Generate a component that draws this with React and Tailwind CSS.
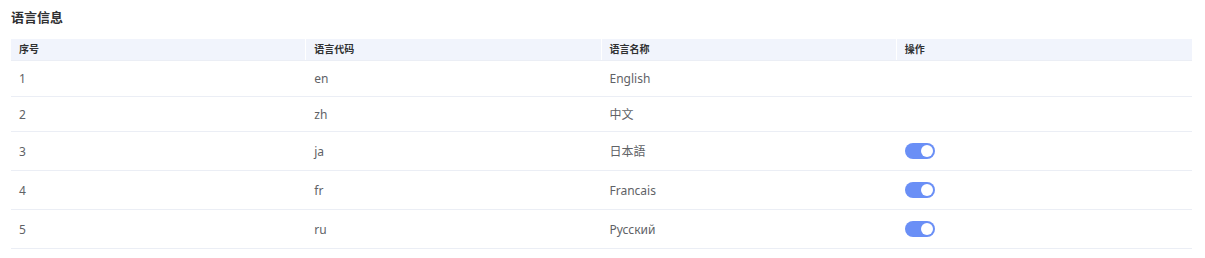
const ROWS = [
  { id: 1, code: 'en', name: 'English', toggle: false },
  { id: 2, code: 'zh', name: '中文', toggle: false },
  { id: 3, code: 'ja', name: '日本語', toggle: true },
  { id: 4, code: 'fr', name: 'Francais', toggle: true },
  { id: 5, code: 'ru', name: 'Русский', toggle: true },
]

function Toggle() {
  return (
    <span className="inline-flex items-center justify-end w-[30px] h-[16px] rounded-full bg-[#6a8ff6] px-[2px]">
      <span className="block w-[12px] h-[12px] rounded-full bg-white" />
    </span>
  )
}

export default function App() {
  return (
    <div className="w-[1205px] h-[258px] bg-white px-[11px] pt-[9px] font-['Noto_Sans','Noto_Sans_CJK_SC',sans-serif]">
      <h2 className="text-[13px] font-bold text-[#303133] leading-[17px] mb-[13px]">语言信息</h2>

      <div className="w-[1181px]">
        {/* header */}
        <div className="grid grid-cols-4 h-[22px] bg-[#f1f4fc] border-b border-[#ebeef5]">
          {['序号', '语言代码', '语言名称', '操作'].map((h, i) => (
            <div
              key={h}
              className={`flex items-center pl-[8px] text-[10px] font-bold text-[#303133] ${i < 3 ? 'border-r border-white' : ''}`}
            >
              {h}
            </div>
          ))}
        </div>

        {/* rows */}
        {ROWS.map((r) => (
          <div
            key={r.id}
            className={`grid grid-cols-4 border-b border-[#ebeef5] text-[12px] text-[#606266] ${r.toggle ? 'h-[39px]' : 'h-[35.5px]'}`}
          >
            <div className="flex items-center pl-[8px] pt-[2px]">{r.id}</div>
            <div className="flex items-center pl-[8px] pt-[2px]">{r.code}</div>
            <div className="flex items-center pl-[8px] pt-[2px]">{r.name}</div>
            <div className="flex items-center pl-[8px]">{r.toggle && <Toggle />}</div>
          </div>
        ))}
      </div>
    </div>
  )
}
